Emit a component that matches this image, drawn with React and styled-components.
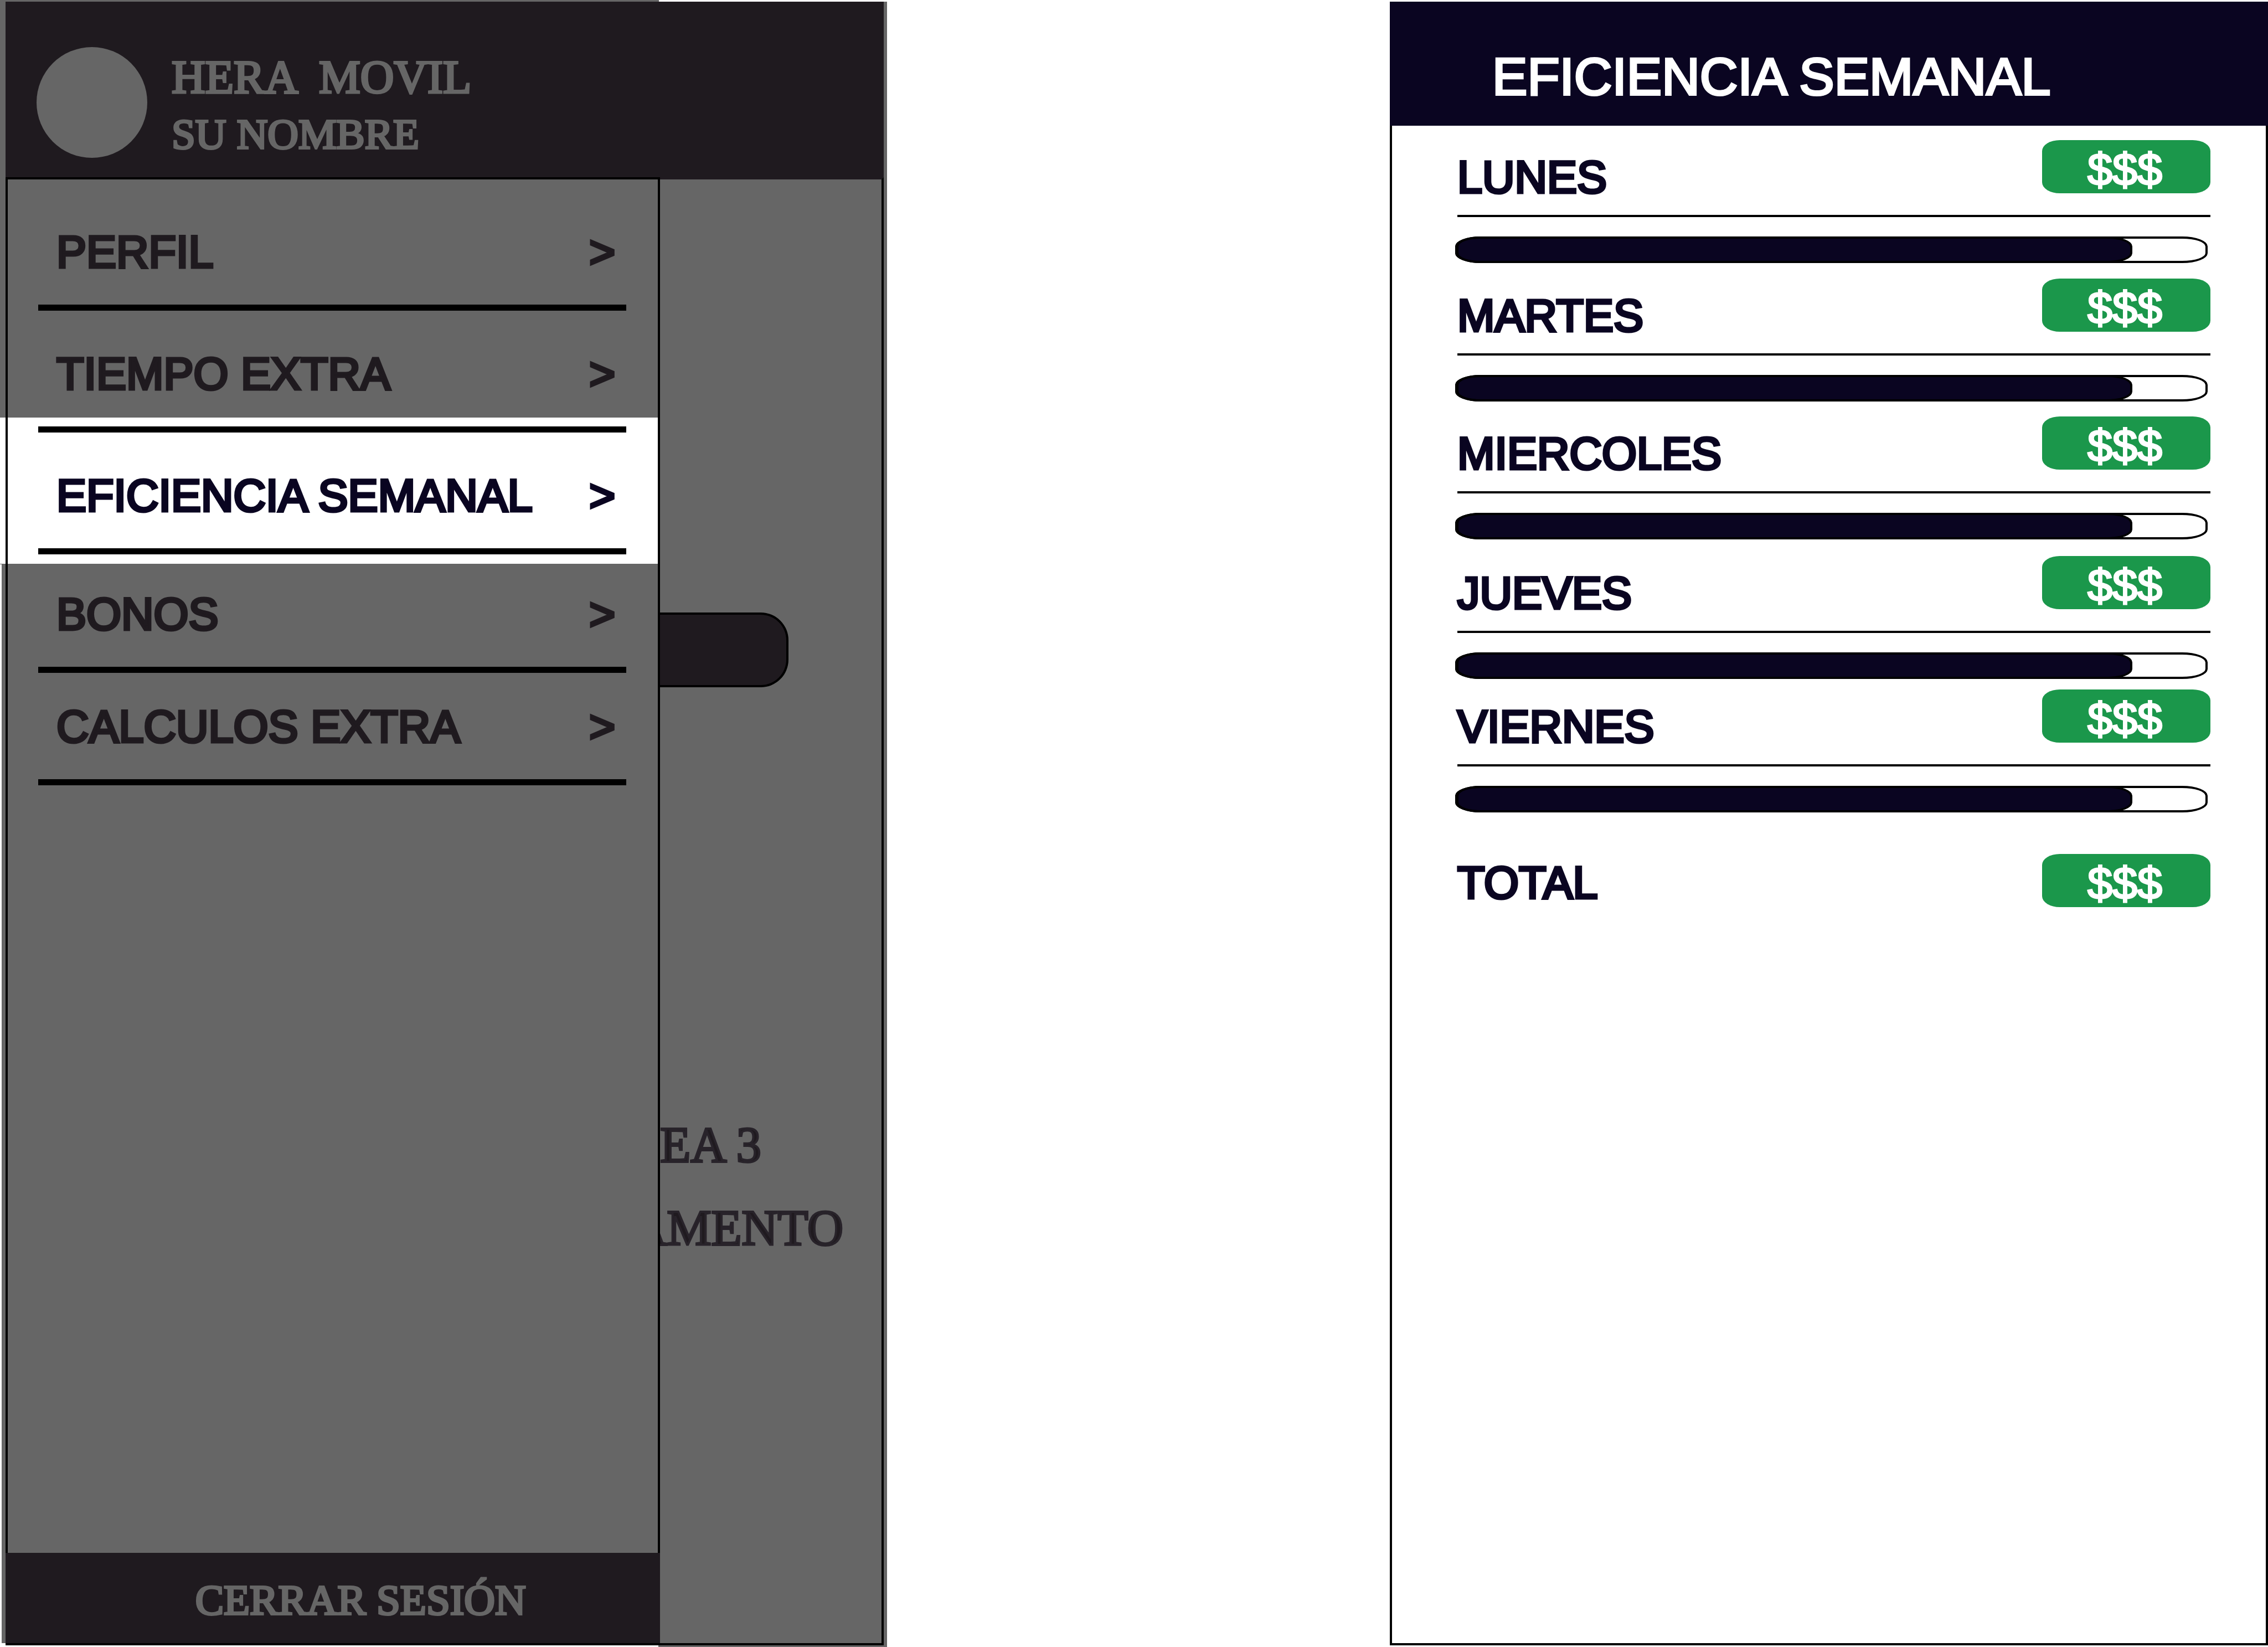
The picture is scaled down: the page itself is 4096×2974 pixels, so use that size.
import React from "react";
import styled, { createGlobalStyle } from "styled-components";

const color = {
  navy: "#0a0521",
  green: "#1b974b",
  shade: "#666666",
  ink: "#1f1a1f",
  inkEdge: "#28232a",
};

const sans = '"Liberation Sans", Arial, sans-serif';
const serif = '"Liberation Serif", "Times New Roman", serif';

const GlobalStyle = createGlobalStyle`
  *, *::before { box-sizing: border-box; }
  body { margin: 0; background: #fff; }
  h1, h2, p, ul { margin: 0; padding: 0; font-weight: 400; }
  ul { list-style: none; }
`;

const Board = styled.div`
  display: grid;
  grid-template-columns: 39.11% 38.72%;
  justify-content: space-between;
  min-height: 100vh;
`;

/* The dimmed phone. The white layers trim the edges of its shade. */
const Phone = styled.section`
  display: flex;
  flex-direction: column;
  padding: 3px 6px 3px 10px;
  background:
    linear-gradient(#fff, #fff) top right / 412px 3px no-repeat,
    linear-gradient(#fff, #fff) bottom left / 3px calc(100% - 1019px) no-repeat,
    linear-gradient(#fff, #fff) bottom left / 1189px 3px no-repeat,
    linear-gradient(#fff, #fff) bottom left / 10px 7px no-repeat,
    ${color.shade};
`;

const PhoneHeader = styled.header`
  display: flex;
  align-items: flex-start;
  gap: 44px;
  height: 317px;
  padding: 82px 56px 0;
  background: ${color.ink};
  color: ${color.shade};
  font-family: ${serif};
`;

const Avatar = styled.div`
  flex: none;
  width: 200px;
  height: 200px;
  border-radius: 50%;
  background: ${color.shade};
`;

const Identity = styled.div`
  padding-top: 4px;
`;

const IdentityLine = styled.p`
  font-size: ${(p) => p.$size}px;
  line-height: 102px;
  white-space: pre;
  -webkit-text-stroke: 4px ${color.shade};
`;

const PhoneBody = styled.div`
  flex: 1;
  display: grid;
  grid-template-columns: 74.55% minmax(0, 1fr);
`;

const Drawer = styled.aside`
  position: relative;
  display: flex;
  flex-direction: column;
  border: 4px solid #000;
`;

const Menu = styled.nav`
  flex: 1;
  padding: 17px 57px 0 55px;
`;

const MenuLink = styled.a`
  position: relative;
  display: flex;
  align-items: flex-end;
  justify-content: space-between;
  height: ${(p) => p.$height}px;
  padding: 0 20px 49px 33px;
  border-bottom: 11px solid #000;
  color: ${(p) => (p.$active ? color.navy : color.ink)};
  font-family: ${sans};
  font-size: 81px;
  line-height: 92px;
  white-space: nowrap;
  text-decoration: none;
  -webkit-text-stroke: 5px currentColor;
`;

/* White band behind the current entry; it also redraws the drawer's edge. */
const MenuEntry = styled.li`
  position: relative;
  ${(p) =>
    p.$active &&
    `
    &::before {
      content: "";
      position: absolute;
      top: -27px;
      bottom: -17px;
      left: -69px;
      right: -57px;
      background: linear-gradient(to right, #fff 10px, #000 10px, #000 14px, #fff 14px);
    }
    &::after {
      content: "";
      position: absolute;
      top: -11px;
      left: 0;
      right: 0;
      height: 11px;
      background: #000;
    }
  `}
`;

const LogoutButton = styled.button`
  margin: 0 -4px;
  padding: 41px 0 34px 100px;
  border: 0;
  background: ${color.ink};
  color: ${color.shade};
  font-family: ${serif};
  font-size: 77px;
  line-height: 88px;
  -webkit-text-stroke: 4px ${color.shade};
`;

const Backdrop = styled.div`
  display: flex;
  flex-direction: column;
  overflow: hidden;
  border: 4px solid #000;
  border-left: 0;
  border-top-color: ${color.ink};
`;

const BackdropButton = styled.button`
  width: 58%;
  height: 135px;
  margin: 782px 0 752px;
  padding: 0;
  border: 4px solid #000;
  border-left: 0;
  border-radius: 0 50px 50px 0;
  background: ${color.ink};
`;

const BackdropText = styled.p`
  align-self: ${(p) => p.$align};
  padding-right: 69px;
  color: ${color.ink};
  font-family: ${serif};
  font-size: 90px;
  line-height: 150px;
  white-space: nowrap;
  -webkit-text-stroke: 4px ${color.inkEdge};
`;

const Report = styled.main`
  display: flex;
  flex-direction: column;
  margin: 3px 0;
  border: 4px solid #000;
  color: ${color.navy};
  font-family: ${sans};
`;

const ReportHeader = styled.header`
  margin: -4px -4px 0;
  padding: 80px 185px 34px;
  background: ${color.navy};
`;

const ReportTitle = styled.h1`
  color: #fff;
  font-size: 95px;
  line-height: 110px;
  white-space: nowrap;
  -webkit-text-stroke: 4px #fff;
`;

const Days = styled.div`
  padding: 26px 100px 0 118px;
`;

const Day = styled.section`
  padding-bottom: ${(p) => p.$space}px;
`;

const DayHead = styled.div`
  display: flex;
  align-items: flex-start;
  justify-content: space-between;
  height: ${(p) => (p.$ruled ? 139 : 96)}px;
  border-bottom: ${(p) => (p.$ruled ? "4px solid #000" : "0")};
`;

const DayName = styled.h2`
  padding-top: ${(p) => (p.$total ? 6 : 21)}px;
  font-size: 81px;
  line-height: 92px;
  -webkit-text-stroke: 5px currentColor;
`;

const Amount = styled.span`
  width: 304px;
  height: 96px;
  padding: 5px 5px 0 0;
  border-radius: 32px / 20px;
  background: ${color.green};
  color: #fff;
  font-size: 81px;
  line-height: 96px;
  text-align: center;
  -webkit-text-stroke: 3px #fff;
`;

const Track = styled.div`
  height: 48px;
  margin: 35px 5px 0 -4px;
  border: 4px solid #000;
  border-radius: 46px / 18px;
`;

const Fill = styled.div`
  height: 48px;
  margin: -4px;
  border: 4px solid #000;
  border-left-width: 6px;
  border-radius: 46px / 18px;
  background: ${color.navy};
`;

const menu = [
  { label: "PERFIL", height: 220 },
  { label: "TIEMPO EXTRA", height: 220 },
  { label: "EFICIENCIA SEMANAL", height: 220, active: true },
  { label: "BONOS", height: 214 },
  { label: "CALCULOS EXTRA", height: 203 },
];

const days = [
  { name: "LUNES", amount: "$$$", progress: 0.905, space: 28 },
  { name: "MARTES", amount: "$$$", progress: 0.905, space: 27 },
  { name: "MIERCOLES", amount: "$$$", progress: 0.905, space: 30 },
  { name: "JUEVES", amount: "$$$", progress: 0.905, space: 19 },
  { name: "VIERNES", amount: "$$$", progress: 0.905, space: 75 },
];

function PhoneView() {
  return (
    <Phone>
      <PhoneHeader>
        <Avatar />
        <Identity>
          <IdentityLine $size={84}>{"HERA  MOVIL"}</IdentityLine>
          <IdentityLine $size={77}>SU NOMBRE</IdentityLine>
        </Identity>
      </PhoneHeader>
      <PhoneBody>
        <Drawer>
          <Menu>
            <ul>
              {menu.map((item) => (
                <MenuEntry key={item.label} $active={item.active}>
                  <MenuLink
                    href="#"
                    $height={item.height}
                    $active={item.active}
                    aria-current={item.active ? "page" : undefined}
                  >
                    <span>{item.label}</span>
                    <span>&gt;</span>
                  </MenuLink>
                </MenuEntry>
              ))}
            </ul>
          </Menu>
          <LogoutButton type="button">CERRAR SESIÓN</LogoutButton>
        </Drawer>
        <Backdrop>
          <BackdropButton type="button" aria-label="Continuar" />
          <BackdropText $align="flex-start">EA 3</BackdropText>
          <BackdropText $align="flex-end">AMENTO</BackdropText>
        </Backdrop>
      </PhoneBody>
    </Phone>
  );
}

function WeeklyReport() {
  return (
    <Report>
      <ReportHeader>
        <ReportTitle>EFICIENCIA SEMANAL</ReportTitle>
      </ReportHeader>
      <Days>
        {days.map((day) => (
          <Day key={day.name} $space={day.space}>
            <DayHead $ruled>
              <DayName>{day.name}</DayName>
              <Amount>{day.amount}</Amount>
            </DayHead>
            <Track
              role="progressbar"
              aria-label={day.name}
              aria-valuenow={Math.round(day.progress * 100)}
            >
              <Fill style={{ width: `${day.progress * 100}%` }} />
            </Track>
          </Day>
        ))}
        <DayHead>
          <DayName $total>TOTAL</DayName>
          <Amount>$$$</Amount>
        </DayHead>
      </Days>
    </Report>
  );
}

export default function App() {
  return (
    <>
      <GlobalStyle />
      <Board>
        <PhoneView />
        <WeeklyReport />
      </Board>
    </>
  );
}
